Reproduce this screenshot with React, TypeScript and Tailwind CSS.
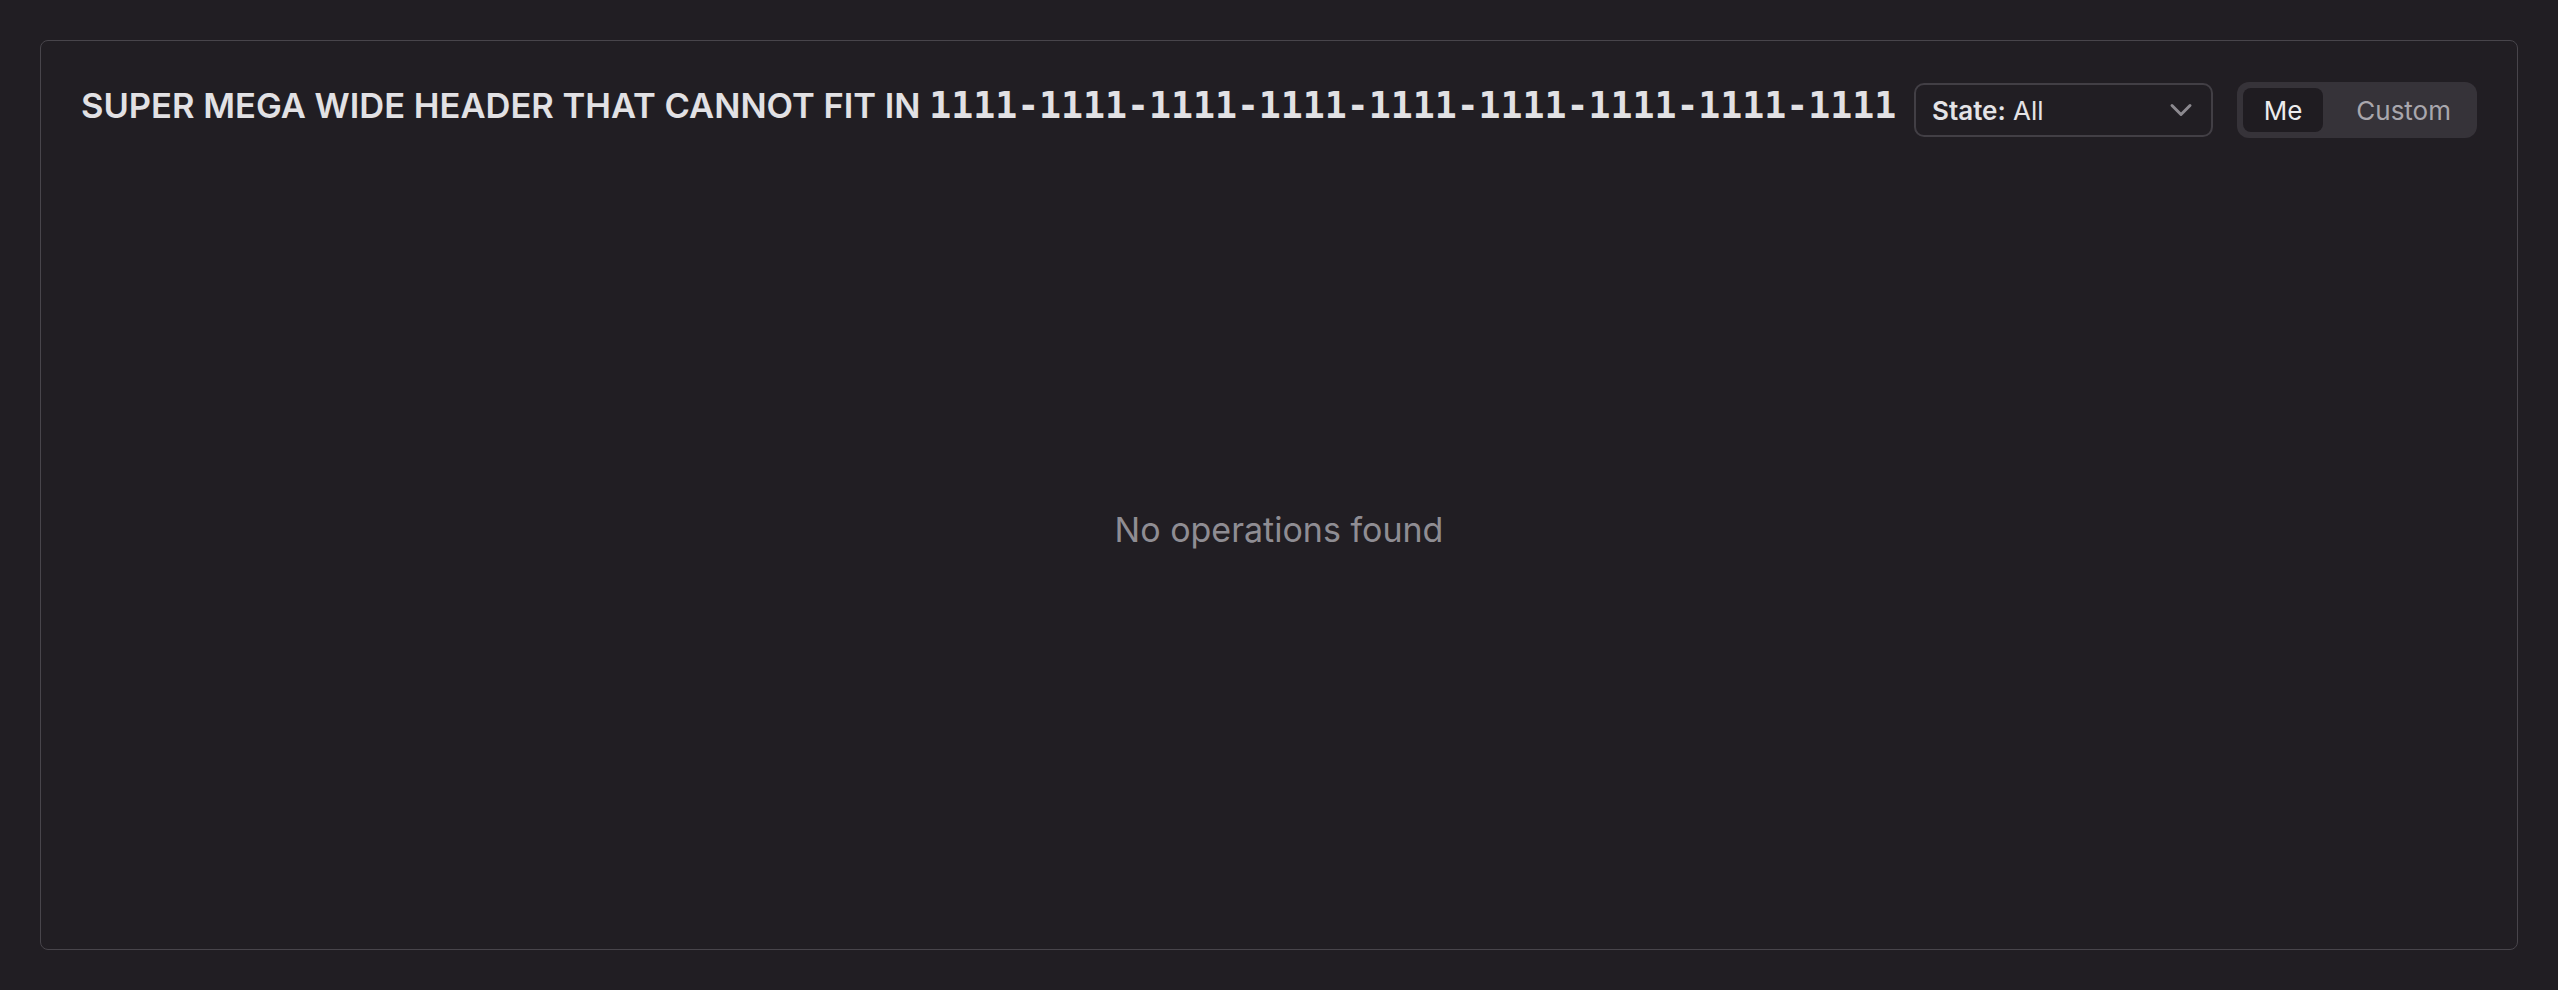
import React, { useState } from "react";
import { ChevronDown } from "lucide-react";

export default function App() {
  const [mode, setMode] = useState<"me" | "custom">("me");

  return (
    <div
      className="min-h-screen bg-[#211e23] p-10 flex flex-col"
      style={{ fontFamily: "Inter, 'Noto Sans', sans-serif" }}
    >
      <div className="flex-1 h-[909px] flex flex-col rounded-lg border border-[#48454b] bg-[#211e23] px-10 pt-[41px] pb-10">
        {/* Header */}
        <div className="flex items-center gap-5">
          <h2 className="flex-1 min-w-0 whitespace-nowrap text-[34.5px] font-semibold leading-[44px] text-[#e2e1e4] -mt-2">
            SUPER MEGA WIDE HEADER THAT CANNOT FIT IN{" "}
            <span className="font-['DejaVu_Sans_Mono',monospace] font-bold text-[36.5px]">
              1111-1111-1111-1111-1111-1111-1111-1111-1111
            </span>
          </h2>

          <div className="flex items-center gap-6">
            <button className="flex h-[54px] w-[299px] items-center justify-between rounded-[10px] border-2 border-[#423f45] pl-4 pr-3 text-[26px] text-[#e4e3e6]">
              <span>
                <span className="font-semibold">State:</span> All
              </span>
              <ChevronDown className="h-9 w-9 text-[#8c898f]" strokeWidth={2} />
            </button>

            <div className="flex h-14 w-60 items-center rounded-xl bg-[#363339] p-1.5 text-[26px]">
              <button
                onClick={() => setMode("me")}
                className={`h-11 w-20 rounded-lg ${
                  mode === "me" ? "bg-[#1f1c21] text-[#ececee]" : "text-[#a9a7ad]"
                }`}
              >
                Me
              </button>
              <button
                onClick={() => setMode("custom")}
                className={`h-11 flex-1 rounded-lg pr-5 text-right ${
                  mode === "custom" ? "bg-[#1f1c21] text-[#ececee]" : "text-[#a9a7ad]"
                }`}
              >
                Custom
              </button>
            </div>
          </div>
        </div>

        {/* Empty state */}
        <div className="flex flex-1 items-center justify-center pt-3">
          <p className="text-[34px] text-[#8f8d93]">No operations found</p>
        </div>
      </div>
    </div>
  );
}
